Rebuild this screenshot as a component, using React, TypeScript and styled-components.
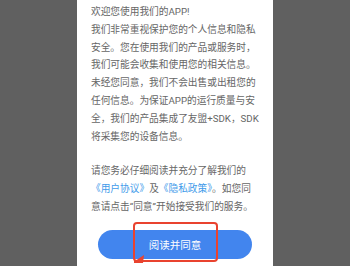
import React from 'react';
import styled, { createGlobalStyle } from 'styled-components';

const GlobalStyle = createGlobalStyle`
  html, body {
    margin: 0;
    padding: 0;
    background: #606060;
  }
  body {
    font-family: Roboto, "Noto Sans CJK SC", sans-serif;
  }
`;

const Screen = styled.div`
  width: 350px;
  height: 266px;
  display: flex;
  justify-content: center;
  background: #606060;
  overflow: hidden;
`;

const Panel = styled.div`
  width: 196px;
  height: 100%;
  box-sizing: border-box;
  background: #ffffff;
  padding: 3px 8px 0 14px;
  display: flex;
  flex-direction: column;
`;

const Paragraph = styled.div<{ $gap?: number }>`
  font-size: 9.7px;
  line-height: 17.8px;
  color: #666666;
  margin-top: ${(p) => p.$gap ?? 0}px;
`;

const Line = styled.div`
  white-space: nowrap;
`;

const Agreement = styled.span`
  color: #3f9bea;
`;

const ButtonWrap = styled.div`
  position: relative;
  margin: 14px 0 0 7px;
  width: 154px;
`;

const AgreeButton = styled.button`
  display: block;
  width: 154px;
  height: 29px;
  border: none;
  border-radius: 15px;
  background: #4285ee;
  color: #ffffff;
  font-family: inherit;
  font-size: 10.5px;
  padding: 0;
`;

const Highlight = styled.div`
  position: absolute;
  left: 35px;
  top: -8px;
  width: 85px;
  height: 40px;
  box-sizing: border-box;
  border: 2px solid #e9432f;
  border-radius: 4px;
  pointer-events: none;
`;

const Pointer = styled.svg`
  position: absolute;
  left: 35px;
  top: 22px;
  overflow: visible;
`;

const intro = [
  '欢迎您使用我们的APP!',
  '我们非常重视保护您的个人信息和隐私',
  '安全。您在使用我们的产品或服务时，',
  '我们可能会收集和使用您的相关信息。',
  '未经您同意，我们不会出售或出租您的',
  '任何信息。为保证APP的运行质量与安',
  '全，我们的产品集成了友盟+SDK，SDK',
  '将采集您的设备信息。',
];

export default function App() {
  return (
    <>
      <GlobalStyle />
      <Screen>
        <Panel>
          <Paragraph>
            {intro.map((t) => (
              <Line key={t}>{t}</Line>
            ))}
          </Paragraph>
          <Paragraph $gap={17}>
            <Line>请您务必仔细阅读并充分了解我们的</Line>
            <Line>
              <Agreement>《用户协议》</Agreement>及<Agreement>《隐私政策》</Agreement>。如您同
            </Line>
            <Line>意请点击“同意”开始接受我们的服务。</Line>
          </Paragraph>
          <ButtonWrap>
            <AgreeButton>阅读并同意</AgreeButton>
            <Highlight />
            <Pointer width="14" height="12" viewBox="0 0 14 12">
              <path d="M1 10 L10 10" stroke="#e9432f" strokeWidth="2" fill="none" />
              <path d="M2 9 L11 3 L10 11 Z" fill="#e9432f" />
            </Pointer>
          </ButtonWrap>
        </Panel>
      </Screen>
    </>
  );
}
